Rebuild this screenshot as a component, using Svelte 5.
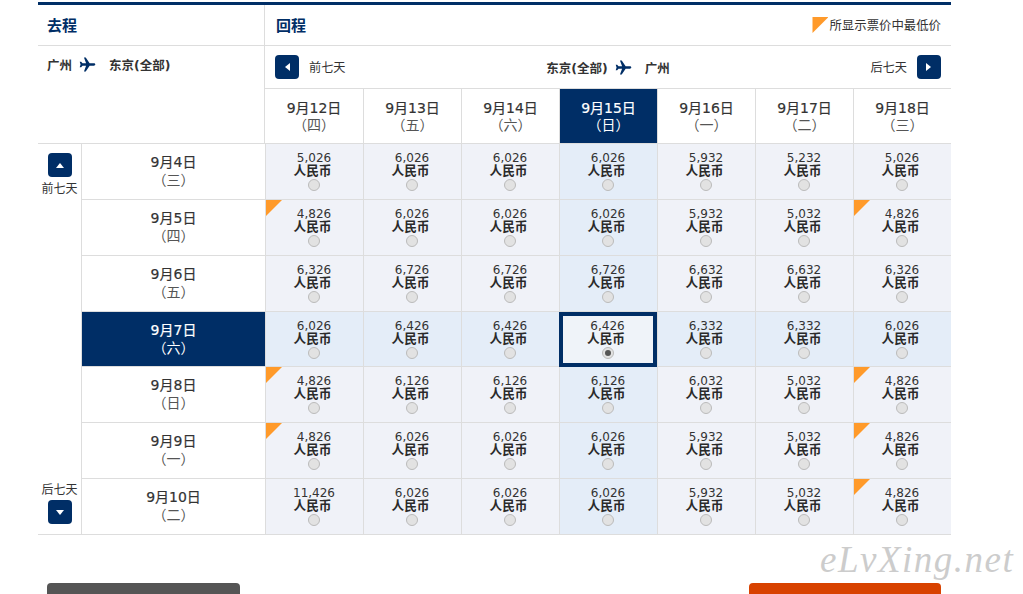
<script>
  const returnDays = [
    ['9月12日', '四'], ['9月13日', '五'], ['9月14日', '六'], ['9月15日', '日'],
    ['9月16日', '一'], ['9月17日', '二'], ['9月18日', '三']
  ];
  const departDays = [
    ['9月4日', '三'], ['9月5日', '四'], ['9月6日', '五'], ['9月7日', '六'],
    ['9月8日', '日'], ['9月9日', '一'], ['9月10日', '二']
  ];
  // a * marks the lowest fare shown
  const fares = [
    ['5,026', '6,026', '6,026', '6,026', '5,932', '5,232', '5,026'],
    ['4,826*', '6,026', '6,026', '6,026', '5,932', '5,032', '4,826*'],
    ['6,326', '6,726', '6,726', '6,726', '6,632', '6,632', '6,326'],
    ['6,026', '6,426', '6,426', '6,426', '6,332', '6,332', '6,026'],
    ['4,826*', '6,126', '6,126', '6,126', '6,032', '5,032', '4,826*'],
    ['4,826*', '6,026', '6,026', '6,026', '5,932', '5,032', '4,826*'],
    ['11,426', '6,026', '6,026', '6,026', '5,932', '5,032', '4,826*']
  ];
  const activeRow = 3;
  const activeCol = 3;
  const plane = 'M23 12c0-1-1-1.6-2-1.6h-6L9.5 2H7l3 8.4H5L3 8H1l1.2 4L1 16h2l2-2.4h5L7 22h2.5l5.5-8.4h6c1 0 2-.6 2-1.6z';
</script>

<div class="page">
  <div class="fare">
    <section class="outbound">
      <h2>去程</h2>
      <div class="route route--out">
        <span>广州</span>
        <svg viewBox="0 0 24 24" aria-hidden="true"><path d={plane} /></svg>
        <span>东京(全部)</span>
      </div>
    </section>

    <section class="inbound">
      <div class="inbound__head">
        <h2>回程</h2>
        <div class="legend"><i class="flag flag--legend"></i>所显示票价中最低价</div>
      </div>
      <div class="route-bar">
        <div class="pager">
          <button type="button" class="nav" aria-label="前七天"><i class="arrow arrow--left"></i></button>
          <span>前七天</span>
        </div>
        <div class="route">
          <span>东京(全部)</span>
          <svg viewBox="0 0 24 24" aria-hidden="true"><path d={plane} /></svg>
          <span>广州</span>
        </div>
        <div class="pager">
          <span>后七天</span>
          <button type="button" class="nav" aria-label="后七天"><i class="arrow arrow--right"></i></button>
        </div>
      </div>
      <div class="dates">
        {#each returnDays as [date, week], col}
          <div class={col === activeCol ? 'date date--active' : 'date'}>
            <strong>{date}</strong>
            <span>（{week}）</span>
          </div>
        {/each}
      </div>
    </section>
  </div>

  <div class="grid">
    <div class="side">
      <div class="side__group side__group--up">
        <button type="button" class="nav" aria-label="前七天"><i class="arrow arrow--up"></i></button>
        <span>前七天</span>
      </div>
      <div class="side__group side__group--down">
        <span>后七天</span>
        <button type="button" class="nav" aria-label="后七天"><i class="arrow arrow--down"></i></button>
      </div>
    </div>

    {#each departDays as [date, week], row}
      <div class={row === activeRow ? 'date date--row date--active' : 'date date--row'}>
        <strong>{date}</strong>
        <span>（{week}）</span>
      </div>
      {#each fares[row] as fare, col}
        <label
          class="cell"
          class:cell--band={row === activeRow || col === activeCol}
          class:cell--picked={row === activeRow && col === activeCol}
        >
          {#if fare.endsWith('*')}<i class="flag"></i>{/if}
          <span class="price">{fare.replace('*', '')}</span>
          <span class="currency">人民币</span>
          <span class={row === activeRow && col === activeCol ? 'radio radio--on' : 'radio'}></span>
        </label>
      {/each}
    {/each}
  </div>

  <div class="actions">
    <button type="button" class="action action--back" aria-label="返回"></button>
    <button type="button" class="action action--next" aria-label="继续"></button>
  </div>

  <div class="watermark">eLvXing.net</div>
</div>

<style>
  :global(body) {
    background: #fff;
  }

  .page {
    position: relative;
    box-sizing: border-box;
    width: 1023px;
    height: 594px;
    overflow: hidden;
    padding: 2px 0 0 38px;
    color: #333;
    font-family: 'DejaVu Sans', 'Noto Sans CJK SC', sans-serif;
  }

  .fare {
    display: grid;
    width: 913px;
    grid-template-columns: 227px 686px;
    border-top: 3px solid #002e66;
  }

  h2 {
    display: flex;
    box-sizing: border-box;
    height: 40px;
    align-items: center;
    margin: 0;
    padding: 0 0 2px 9px;
    color: #002e66;
    font-size: 15px;
    font-weight: 700;
  }

  .outbound {
    border-right: 1px solid #ddd;
  }

  .outbound h2 {
    height: 41px;
    border-bottom: 1px solid #ddd;
  }

  .inbound h2 {
    padding-left: 11px;
  }

  .route {
    display: flex;
    align-items: center;
    color: #333;
    font-size: 12.5px;
    font-weight: 700;
  }

  .route svg {
    width: 17px;
    height: 17px;
    margin: 0 13px 0 7px;
    fill: #002e66;
  }

  .route--out {
    padding: 9px 0 0 9px;
  }

  .inbound__head {
    display: flex;
    box-sizing: border-box;
    height: 41px;
    align-items: center;
    justify-content: space-between;
    border-bottom: 1px solid #ddd;
  }

  .legend {
    display: flex;
    align-items: center;
    padding-right: 10px;
    color: #333;
    font-size: 12.4px;
  }

  .flag {
    position: absolute;
    top: 0;
    left: 0;
    width: 16px;
    height: 16px;
    background: #ff9a2a;
    clip-path: polygon(0 0, 100% 0, 0 100%);
  }

  .flag--legend {
    position: static;
    margin-right: 1px;
  }

  .route-bar {
    display: flex;
    box-sizing: border-box;
    height: 42px;
    align-items: center;
    justify-content: space-between;
    padding: 0 10px;
  }

  .pager {
    display: flex;
    align-items: center;
    gap: 10px;
    font-size: 12.2px;
  }

  .nav {
    display: grid;
    width: 24px;
    height: 24px;
    place-items: center;
    border: 0;
    border-radius: 4px;
    padding: 0;
    background: #002e66;
  }

  .arrow {
    display: block;
    width: 0;
    height: 0;
    border: 4px solid transparent;
  }

  .arrow--left {
    border-left-width: 0;
    border-right: 5px solid #fff;
  }

  .arrow--right {
    border-right-width: 0;
    border-left: 5px solid #fff;
  }

  .arrow--up {
    border-top-width: 0;
    border-bottom: 5px solid #fff;
  }

  .arrow--down {
    border-bottom-width: 0;
    border-top: 5px solid #fff;
  }

  .dates {
    display: grid;
    height: 54px;
    grid-template-columns: repeat(7, 98px);
    border-top: 1px solid #ddd;
  }

  .date {
    display: flex;
    box-sizing: border-box;
    flex-direction: column;
    align-items: center;
    padding-top: 11px;
    border-left: 1px solid #ddd;
    line-height: 17px;
  }

  .date:first-child {
    border-left: 0;
  }

  .date strong {
    font-size: 14px;
    font-weight: 400;
    -webkit-text-stroke: 0.2px currentColor;
  }

  .date span {
    color: #555;
    font-size: 14px;
  }

  .date--active,
  .date--active span {
    color: #fff;
    background: #002e66;
  }

  .date--row {
    border-bottom: 1px solid #ddd;
    padding-top: 9px;
    line-height: 18px;
  }

  .grid {
    display: grid;
    box-sizing: border-box;
    width: 913px;
    height: 392px;
    grid-template-columns: 43px 184px repeat(7, 98px);
    grid-template-rows: 56px 56px 56px 55px 56px 56px 56px;
    border-top: 1px solid #ddd;
  }

  .side {
    display: flex;
    grid-row: 1 / 8;
    flex-direction: column;
    justify-content: space-between;
    box-sizing: border-box;
    padding: 9px 0 10px;
    border-bottom: 1px solid #ddd;
    font-size: 12px;
    line-height: 14px;
  }

  .side__group {
    display: flex;
    flex-direction: column;
    align-items: center;
  }

  .side__group--up {
    gap: 5px;
  }

  .side__group--down {
    gap: 3px;
  }

  .cell {
    position: relative;
    display: flex;
    box-sizing: border-box;
    flex-direction: column;
    align-items: center;
    padding: 8px 1px 0 0;
    border-left: 1px solid #ddd;
    border-bottom: 1px solid #ddd;
    background: #f0f2f8;
    color: #333;
    line-height: 13px;
  }

  .cell--band {
    background: #e4edf8;
  }

  .cell--picked {
    padding-top: 4px;
    border: 4px solid #002e66;
    background: #eff3f9;
  }

  .price {
    font-size: 12px;
  }

  .currency {
    margin: -1px 3px 1px 0;
    color: #2a2a2a;
    font-size: 12.7px;
    font-weight: 700;
    line-height: 14px;
  }

  .radio {
    position: relative;
    box-sizing: border-box;
    width: 12px;
    height: 12px;
    border: 1px solid #bbb;
    border-radius: 50%;
    background: #e2e2e2;
  }

  .radio--on::after {
    position: absolute;
    top: 2px;
    left: 2px;
    width: 6px;
    height: 6px;
    border-radius: 50%;
    background: #555;
    content: '';
  }

  .actions {
    display: flex;
    width: 894px;
    justify-content: space-between;
    padding: 48px 0 0 9px;
  }

  .action {
    height: 40px;
    border: 0;
    border-radius: 4px;
  }

  .action--back {
    width: 193px;
    background: #555;
  }

  .action--next {
    width: 192px;
    background: #d84200;
  }

  .watermark {
    position: absolute;
    top: 538px;
    left: 820px;
    color: #ccc;
    font-family: 'Liberation Serif', serif;
    font-size: 37px;
    font-style: italic;
    letter-spacing: 1.5px;
  }
</style>
